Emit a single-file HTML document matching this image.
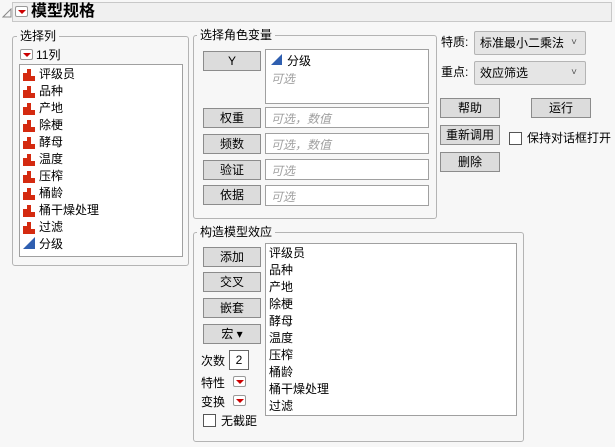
<!DOCTYPE html>
<html><head><meta charset="utf-8"><style>
*{box-sizing:border-box;margin:0;padding:0}
body{width:615px;height:447px;background:#f7f7f7;font-family:"Liberation Sans","Noto Sans CJK SC",sans-serif;font-size:12px;color:#000;position:relative;overflow:hidden}
.a{position:absolute}
.grp{position:absolute;border:1px solid #b4b4b4;border-radius:3px}
.lbl{position:absolute;background:#f7f7f7;padding:0 3px;font-size:12px;line-height:14px}
.btn{position:absolute;width:58px;height:20px;background:#dcdcdc;border:1px solid #8c8c8c;text-align:center;line-height:18px;font-size:12px}
.box{position:absolute;background:#fff;border:1px solid #a0a0a0}
.ph{color:#a0a0a0;font-style:italic;font-size:12px;position:absolute;left:5px;top:2px}
.red{position:absolute;width:13px;height:11px;border:1px solid #999;background:#fff;border-radius:2px}
.red:after{content:"";position:absolute;left:2px;top:3px;border-left:4px solid transparent;border-right:4px solid transparent;border-top:4px solid #c00}
.it{position:absolute;left:20px;font-size:12px;line-height:17px}
.chk{position:absolute;width:13px;height:13px;border:1px solid #555;background:#fff}
.cb{position:absolute;width:112px;height:24px;background:#e5e5e5;border:1px solid #b4b4b4;border-radius:2px;padding-left:5px;line-height:22px}
.cb:after{content:"˅";position:absolute;right:8px;top:0;font-size:10px;color:#555}
</style></head><body>
<div class="a" style="left:12px;top:2px;width:600px;height:20px;background:#f0f0f0;border:1px solid #c8c8c8"></div>
<svg class="a" style="left:2px;top:8px" width="10" height="10"><path d="M1 9 L9 9 L9 1 Z" fill="none" stroke="#888"/></svg>
<div class="red" style="left:15px;top:6px"></div>
<div class="a" style="left:31px;top:2px;font-size:16px;font-weight:bold;line-height:20px">模型规格</div>

<div class="grp" style="left:12px;top:36px;width:177px;height:230px"></div>
<div class="lbl" style="left:17px;top:29px">选择列</div>
<div class="red" style="left:20px;top:49px"></div>
<div class="a" style="left:36px;top:47px;line-height:16px">11列</div>
<div class="box" style="left:19px;top:64px;width:164px;height:193px"></div>
<div class="a" style="left:19px;top:66px;width:160px">
<div class="it" style="top:0">评级员</div><div class="it" style="top:17px">品种</div><div class="it" style="top:34px">产地</div><div class="it" style="top:51px">除梗</div><div class="it" style="top:68px">酵母</div><div class="it" style="top:85px">温度</div><div class="it" style="top:102px">压榨</div><div class="it" style="top:119px">桶龄</div><div class="it" style="top:136px">桶干燥处理</div><div class="it" style="top:153px">过滤</div><div class="it" style="top:170px">分级</div>
<svg class="a" style="left:4px;top:2px" width="14" height="185">
<defs></defs>
<g fill="#d42a10">
<g transform="translate(0,0)"><rect x="0" y="5" width="4" height="8"/><rect x="4" y="1" width="4" height="12"/><rect x="8" y="8" width="4" height="5"/></g>
<g transform="translate(0,17)"><rect x="0" y="5" width="4" height="8"/><rect x="4" y="1" width="4" height="12"/><rect x="8" y="8" width="4" height="5"/></g>
<g transform="translate(0,34)"><rect x="0" y="5" width="4" height="8"/><rect x="4" y="1" width="4" height="12"/><rect x="8" y="8" width="4" height="5"/></g>
<g transform="translate(0,51)"><rect x="0" y="5" width="4" height="8"/><rect x="4" y="1" width="4" height="12"/><rect x="8" y="8" width="4" height="5"/></g>
<g transform="translate(0,68)"><rect x="0" y="5" width="4" height="8"/><rect x="4" y="1" width="4" height="12"/><rect x="8" y="8" width="4" height="5"/></g>
<g transform="translate(0,85)"><rect x="0" y="5" width="4" height="8"/><rect x="4" y="1" width="4" height="12"/><rect x="8" y="8" width="4" height="5"/></g>
<g transform="translate(0,102)"><rect x="0" y="5" width="4" height="8"/><rect x="4" y="1" width="4" height="12"/><rect x="8" y="8" width="4" height="5"/></g>
<g transform="translate(0,119)"><rect x="0" y="5" width="4" height="8"/><rect x="4" y="1" width="4" height="12"/><rect x="8" y="8" width="4" height="5"/></g>
<g transform="translate(0,136)"><rect x="0" y="5" width="4" height="8"/><rect x="4" y="1" width="4" height="12"/><rect x="8" y="8" width="4" height="5"/></g>
<g transform="translate(0,153)"><rect x="0" y="5" width="4" height="8"/><rect x="4" y="1" width="4" height="12"/><rect x="8" y="8" width="4" height="5"/></g>
</g>
<path d="M0 183 L12 171 L12 183 Z" fill="#2f5fb0" transform="translate(0,-2)"/>
</svg>
</div>

<div class="grp" style="left:193px;top:35px;width:244px;height:184px"></div>
<div class="lbl" style="left:197px;top:28px">选择角色变量</div>
<div class="btn" style="left:203px;top:51px">Y</div>
<div class="box" style="left:265px;top:49px;width:164px;height:55px">
<svg class="a" style="left:5px;top:4px" width="12" height="12"><path d="M0 11 L11 0 L11 11 Z" fill="#2f5fb0"/></svg>
<div class="a" style="left:21px;top:2px">分级</div>
<div class="ph" style="top:20px">可选</div></div>
<div class="btn" style="left:203px;top:108px">权重</div>
<div class="box" style="left:265px;top:107px;width:164px;height:21px"><div class="ph">可选，数值</div></div>
<div class="btn" style="left:203px;top:134px">频数</div>
<div class="box" style="left:265px;top:133px;width:164px;height:21px"><div class="ph">可选，数值</div></div>
<div class="btn" style="left:203px;top:160px">验证</div>
<div class="box" style="left:265px;top:159px;width:164px;height:21px"><div class="ph">可选</div></div>
<div class="btn" style="left:203px;top:185px">依据</div>
<div class="box" style="left:265px;top:185px;width:164px;height:21px"><div class="ph">可选</div></div>

<div class="a" style="left:441px;top:33px">特质:</div>
<div class="cb" style="left:474px;top:31px">标准最小二乘法</div>
<div class="a" style="left:441px;top:63px">重点:</div>
<div class="cb" style="left:474px;top:61px">效应筛选</div>
<div class="btn" style="left:440px;top:98px;width:60px">帮助</div>
<div class="btn" style="left:531px;top:98px;width:60px">运行</div>
<div class="btn" style="left:440px;top:125px;width:60px">重新调用</div>
<div class="chk" style="left:509px;top:132px"></div>
<div class="a" style="left:527px;top:129px">保持对话框打开</div>
<div class="btn" style="left:440px;top:152px;width:60px">删除</div>

<div class="grp" style="left:193px;top:232px;width:331px;height:210px"></div>
<div class="lbl" style="left:197px;top:225px">构造模型效应</div>
<div class="btn" style="left:203px;top:247px">添加</div>
<div class="btn" style="left:203px;top:272px">交叉</div>
<div class="btn" style="left:203px;top:298px">嵌套</div>
<div class="btn" style="left:203px;top:324px">宏 ▾</div>
<div class="a" style="left:201px;top:352px">次数</div>
<div class="box" style="left:229px;top:350px;width:20px;height:20px;border-color:#666;text-align:center;line-height:18px">2</div>
<div class="a" style="left:201px;top:374px">特性</div><div class="red" style="left:233px;top:376px"></div>
<div class="a" style="left:201px;top:393px">变换</div><div class="red" style="left:233px;top:395px"></div>
<div class="chk" style="left:203px;top:414px"></div>
<div class="a" style="left:221px;top:412px">无截距</div>
<div class="box" style="left:265px;top:243px;width:252px;height:173px">
<div class="a" style="left:3px;top:1px;line-height:17px">评级员<br>品种<br>产地<br>除梗<br>酵母<br>温度<br>压榨<br>桶龄<br>桶干燥处理<br>过滤</div></div>
</body></html>
